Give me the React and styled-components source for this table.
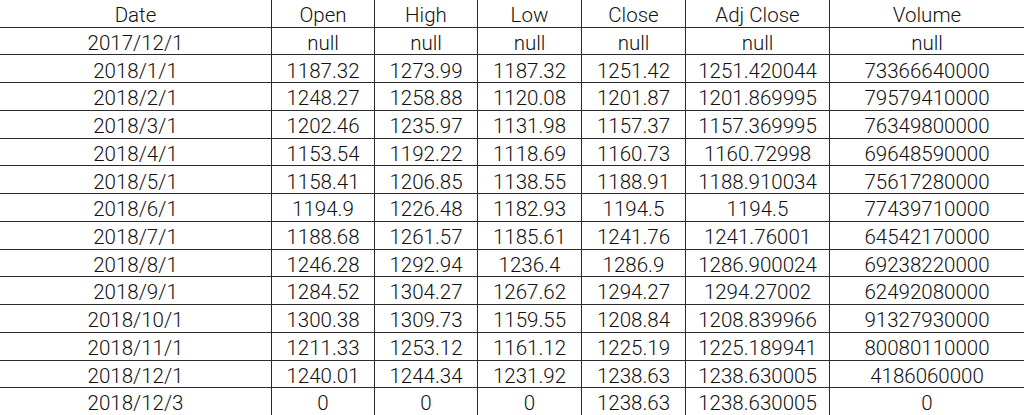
import React from 'react';
import styled, { createGlobalStyle } from 'styled-components';

const GlobalStyle = createGlobalStyle`
    body {
        margin: 0;
        background: #ffffff;
        font-family: Roboto, "Noto Sans CJK SC", sans-serif;
    }
`;

const Sheet = styled.div`
    width: 1024px;
    height: 415px;
    overflow: hidden;

    display: grid;
    grid-template-columns: 271px 102px 102px 103px 103px 143px 194px;
    grid-template-rows: repeat(15, 1fr);
    gap: 1px;

    background-color: #2b2b2b;
`;

const Cell = styled.div`
    display: flex;
    align-items: center;
    justify-content: center;
    min-height: 0;
    padding-top: 4px;

    background-color: #ffffff;
    color: #111111;

    font-size: 20.5px;
    font-weight: 300;
    line-height: 1;
    white-space: nowrap;
`;

const header = ['Date', 'Open', 'High', 'Low', 'Close', 'Adj Close', 'Volume'];

const rows = [
    ['2017/12/1', 'null', 'null', 'null', 'null', 'null', 'null'],
    ['2018/1/1', '1187.32', '1273.99', '1187.32', '1251.42', '1251.420044', '73366640000'],
    ['2018/2/1', '1248.27', '1258.88', '1120.08', '1201.87', '1201.869995', '79579410000'],
    ['2018/3/1', '1202.46', '1235.97', '1131.98', '1157.37', '1157.369995', '76349800000'],
    ['2018/4/1', '1153.54', '1192.22', '1118.69', '1160.73', '1160.72998', '69648590000'],
    ['2018/5/1', '1158.41', '1206.85', '1138.55', '1188.91', '1188.910034', '75617280000'],
    ['2018/6/1', '1194.9', '1226.48', '1182.93', '1194.5', '1194.5', '77439710000'],
    ['2018/7/1', '1188.68', '1261.57', '1185.61', '1241.76', '1241.76001', '64542170000'],
    ['2018/8/1', '1246.28', '1292.94', '1236.4', '1286.9', '1286.900024', '69238220000'],
    ['2018/9/1', '1284.52', '1304.27', '1267.62', '1294.27', '1294.27002', '62492080000'],
    ['2018/10/1', '1300.38', '1309.73', '1159.55', '1208.84', '1208.839966', '91327930000'],
    ['2018/11/1', '1211.33', '1253.12', '1161.12', '1225.19', '1225.189941', '80080110000'],
    ['2018/12/1', '1240.01', '1244.34', '1231.92', '1238.63', '1238.630005', '4186060000'],
    ['2018/12/3', '0', '0', '0', '1238.63', '1238.630005', '0'],
];

function App(){
    return(
        <>
            <GlobalStyle />
            <Sheet>
                {header.map(h => <Cell key={h}>{h}</Cell>)}
                {rows.map((r, i) =>
                    r.map((v, j) => <Cell key={`${i}-${j}`}>{v}</Cell>)
                )}
            </Sheet>
        </>
    )
}

export default App;
